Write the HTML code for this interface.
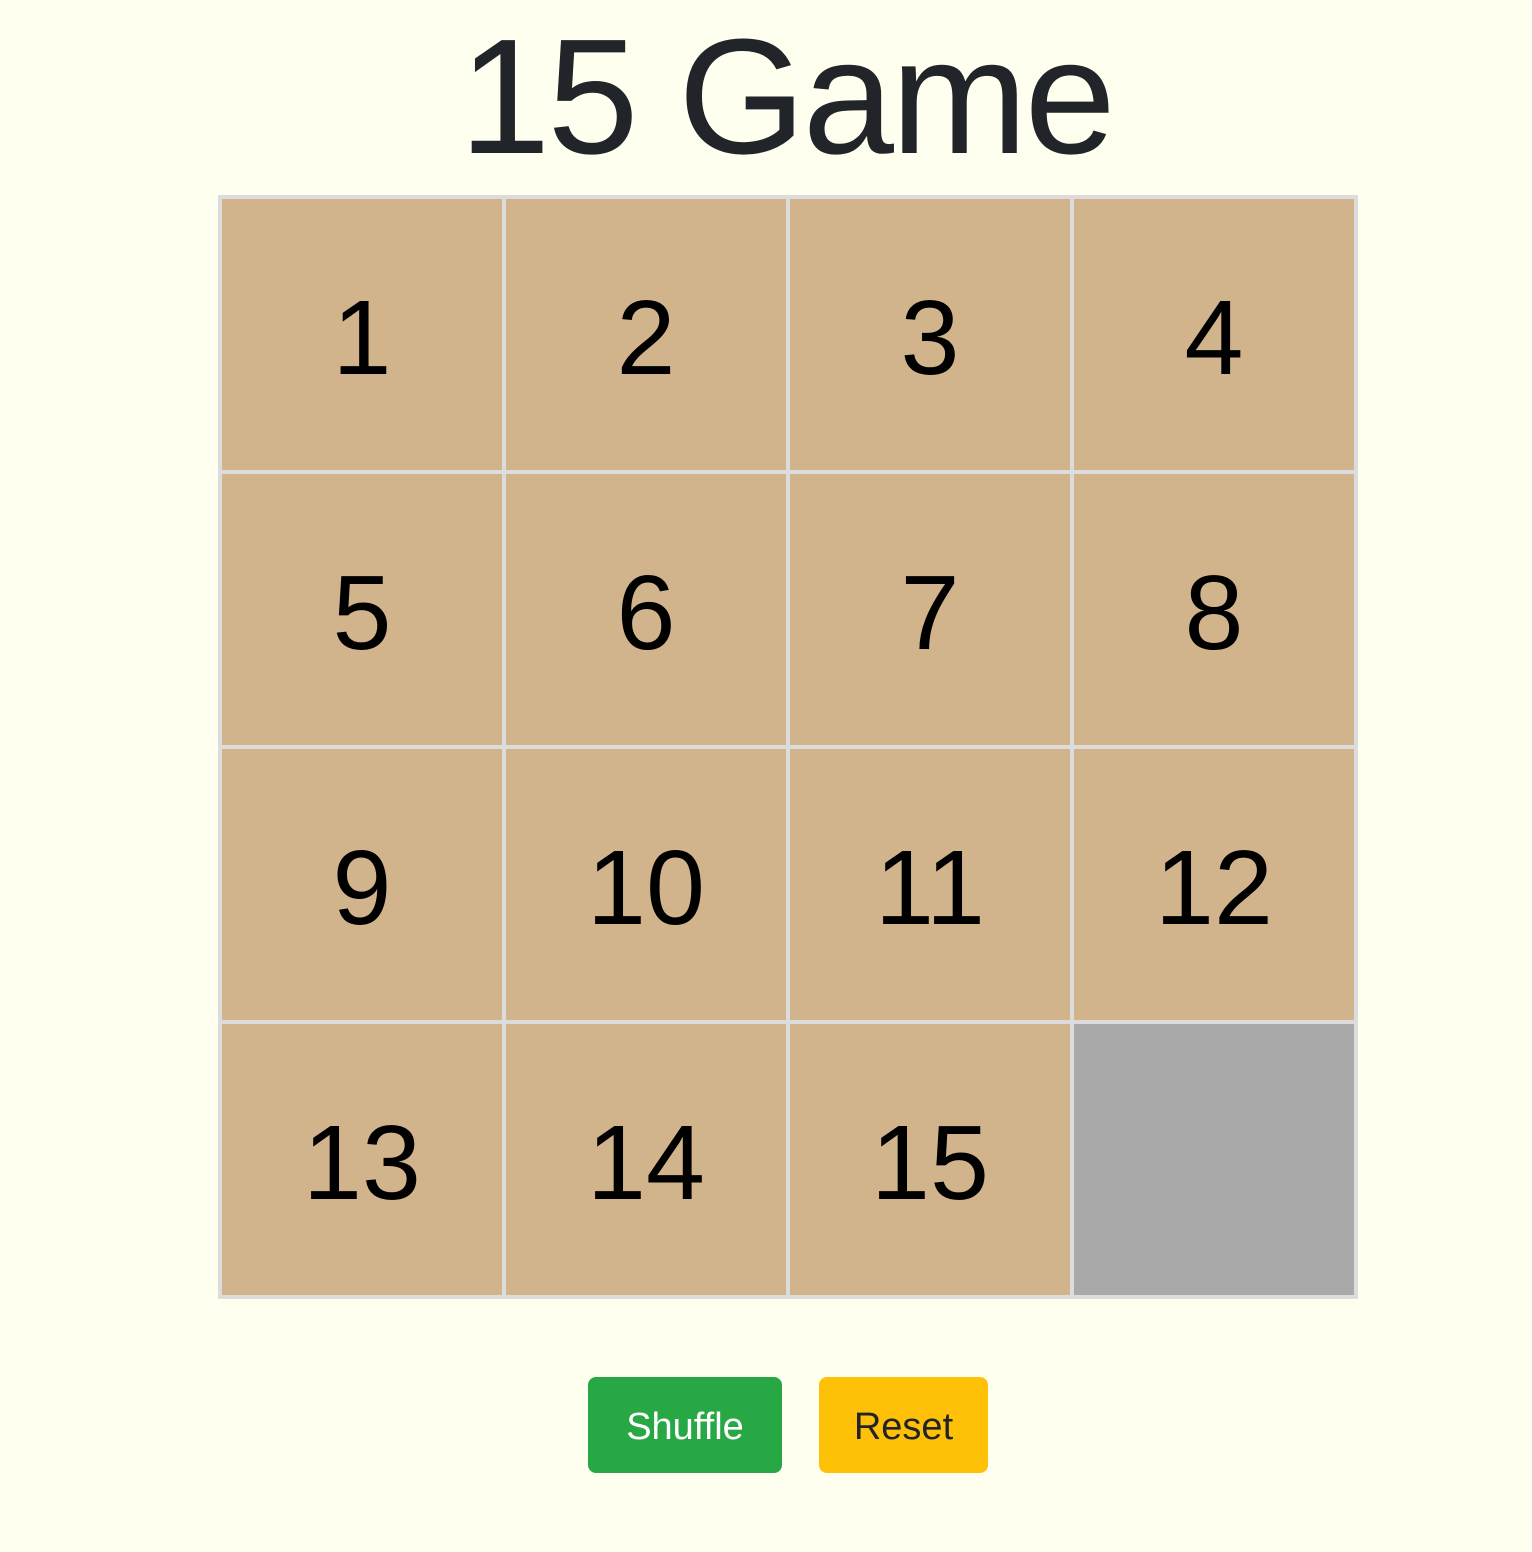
<!DOCTYPE html>
<html><head><meta charset="utf-8"><style>
html,body{margin:0;padding:0;background:#fffff0;width:1532px;height:1552px;overflow:hidden;font-family:"Liberation Sans",sans-serif;}
h1{position:absolute;left:20px;width:1532px;top:2px;margin:0;text-align:center;font-size:164px;font-weight:normal;color:#212529;line-height:190px;letter-spacing:-3px;}
.grid{position:absolute;left:218px;top:195px;width:1140px;height:1104px;background:#dcdcdc;}
.c{position:absolute;width:280px;height:271px;background:#d2b48c;color:#000;font-size:106px;line-height:279px;text-align:center;overflow:hidden;}
.e{background:#a9a9a9;}
.b{position:absolute;top:1377px;height:96px;border-radius:8px;font-size:38px;line-height:100px;text-align:center;}
</style></head><body>
<h1>15 Game</h1>
<div class="grid">
<div class="c" style="left:4px;top:4px">1</div>
<div class="c" style="left:288px;top:4px">2</div>
<div class="c" style="left:572px;top:4px">3</div>
<div class="c" style="left:856px;top:4px">4</div>
<div class="c" style="left:4px;top:279px">5</div>
<div class="c" style="left:288px;top:279px">6</div>
<div class="c" style="left:572px;top:279px">7</div>
<div class="c" style="left:856px;top:279px">8</div>
<div class="c" style="left:4px;top:554px">9</div>
<div class="c" style="left:288px;top:554px">10</div>
<div class="c" style="left:572px;top:554px">11</div>
<div class="c" style="left:856px;top:554px">12</div>
<div class="c" style="left:4px;top:829px">13</div>
<div class="c" style="left:288px;top:829px">14</div>
<div class="c" style="left:572px;top:829px">15</div>
<div class="c e" style="left:856px;top:829px"></div>
</div>
<div class="b" style="left:588px;width:194px;background:#28a745;color:#fff">Shuffle</div>
<div class="b" style="left:819px;width:169px;background:#ffc107;color:#212529">Reset</div>
</body></html>
